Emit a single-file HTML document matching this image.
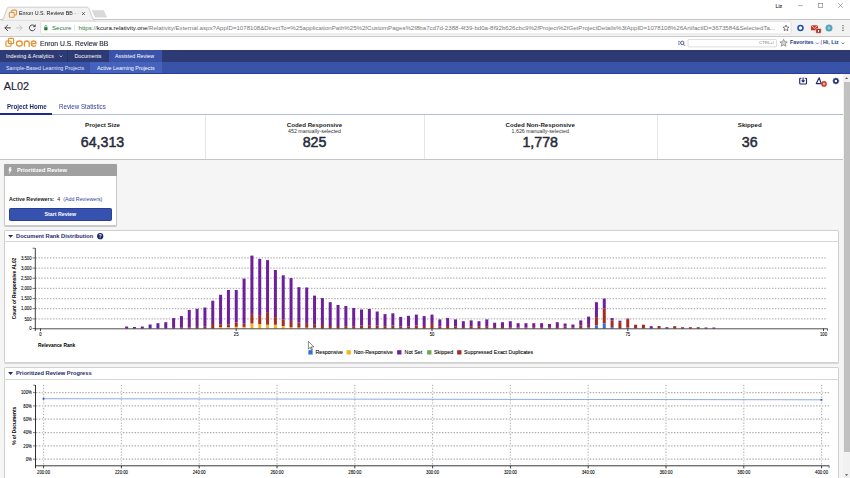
<!DOCTYPE html>
<html>
<head>
<meta charset="utf-8">
<title>Enron U.S. Review BB</title>
<style>
*{margin:0;padding:0;box-sizing:border-box}
html,body{width:850px;height:478px;overflow:hidden;background:#fff}
body{font-family:"Liberation Sans",sans-serif;color:#222;position:relative}
.a{position:absolute;white-space:nowrap;line-height:1}
.b{font-weight:bold}
svg{position:absolute;left:0;top:0}
svg text{font-family:"Liberation Sans",sans-serif}
.sn{-webkit-text-stroke:0.5px #262a38}
.t4{font-size:4.85px;fill:#000;stroke:#000;stroke-width:0.08px}
</style>
</head>
<body>

<!-- ============ browser chrome ============ -->
<div class="a" style="left:0;top:0;width:850px;height:19.5px;background:#fff"></div>
<div class="a" style="left:0;top:19px;width:850px;height:17.5px;background:#f2f2f2;border-top:0.7px solid #c2c2c2;border-bottom:0.8px solid #c9c9c9"></div>
<svg width="850" height="52" viewBox="0 0 850 52">
  <!-- tab -->
  <path d="M1.5 19.4 L3.2 19 L7.2 8.2 Q7.6 7.2 8.8 7.2 L87 7.2 Q88.2 7.2 88.7 8.2 L93 19 L95 19.4 L95 20.2 L1.5 20.2 Z" fill="#f2f2f2" stroke="#bdbdbd" stroke-width="0.7"/>
  <rect x="3.6" y="19.1" width="89" height="1.3" fill="#f2f2f2"/>
  <!-- new tab button -->
  <path d="M92.3 10.4 L103.6 10.4 L106.6 17.2 L95.2 17.2 Z" fill="#d9d9d9" stroke="#cfcfcf" stroke-width="0.4"/>
  <!-- favicon -->
  <g fill="none" stroke="#e39a3c" stroke-width="1.1">
    <rect x="11.6" y="10.1" width="4.9" height="4.9" rx="1"/>
    <rect x="9.3" y="12.4" width="4.9" height="4.9" rx="1" fill="#f2f2f2"/>
  </g>
  <!-- tab close -->
  <path d="M82 12.2 L84.8 15 M84.8 12.2 L82 15" stroke="#333" stroke-width="0.7"/>
  <!-- window controls -->
  <g stroke="#777" stroke-width="0.6" fill="none">
    <path d="M798.3 5.6 H802.8"/>
    <rect x="818.5" y="3.3" width="4.2" height="4.2"/>
    <path d="M838.2 3.2 L842.8 7.8 M842.8 3.2 L838.2 7.8"/>
  </g>
<text x="775.4" y="7.6" font-size="5.4" fill="#333" stroke="#333" stroke-width="0.1">Liz</text>
  <!-- nav arrows -->
  <g stroke="#3c3c3c" stroke-width="0.95" fill="none" stroke-linecap="round" stroke-linejoin="round">
    <path d="M10.4 27.9 H5 M7.6 25.2 L4.9 27.9 L7.6 30.6"/>
  </g>
  <g stroke="#c4c4c4" stroke-width="0.95" fill="none" stroke-linecap="round" stroke-linejoin="round">
    <path d="M16.6 27.9 H22 M19.4 25.2 L22.1 27.9 L19.4 30.6"/>
  </g>
  <g stroke="#3c3c3c" stroke-width="0.95" fill="none">
    <path d="M34.6 26.1 A2.9 2.9 0 1 0 35.1 28.6"/>
    <path d="M35.4 24.4 V26.8 H33" fill="#3c3c3c" stroke-width="0.4"/>
  </g>
  <!-- omnibox -->
  <rect x="40.6" y="21.6" width="750.4" height="12.3" rx="1.2" fill="#fff" stroke="#d2d2d2" stroke-width="0.6"/>
  <!-- lock -->
  <rect x="44.2" y="27.3" width="3.3" height="2.9" rx="0.3" fill="#1c7c30"/>
  <path d="M44.9 27.4 V26.4 A0.95 0.95 0 0 1 46.8 26.4 V27.4" stroke="#1c7c30" stroke-width="0.6" fill="none"/>
  <rect x="74.3" y="24.6" width="0.5" height="6.4" fill="#c8c8c8"/>
  <!-- bookmark star -->
  <path d="M786 25 L786.9 27 L789 27.2 L787.4 28.6 L787.9 30.7 L786 29.6 L784.1 30.7 L784.6 28.6 L783 27.2 L785.1 27 Z" fill="none" stroke="#333" stroke-width="0.6" stroke-linejoin="round"/>
  <!-- extensions -->
  <circle cx="800.5" cy="28" r="2.5" fill="#fff" stroke="#1d4fa8" stroke-width="1.5"/>
  <rect x="811" y="25.3" width="7" height="5" fill="#c0392b"/>
  <path d="M811 25.3 L814.5 28.2 L818 25.3" stroke="#fff" stroke-width="0.6" fill="none"/>
  <rect x="815.8" y="28.6" width="5.4" height="4.6" rx="0.6" fill="#a82a1a" stroke="#fff" stroke-width="0.5"/>
  <rect x="817.9" y="30" width="1.2" height="2" fill="#fff"/>
  <circle cx="829" cy="28" r="3.5" fill="#5aa6b8"/>
  <circle cx="829" cy="28" r="2" fill="#8fd0dc" stroke="#3d7f9c" stroke-width="0.5"/>
  <g fill="#444"><circle cx="843" cy="25.6" r="0.65"/><circle cx="843" cy="28" r="0.65"/><circle cx="843" cy="30.4" r="0.65"/></g>

  <!-- app logo -->
  <g fill="none" stroke="#df9233" stroke-width="1.15">
    <rect x="8.4" y="38.4" width="5.2" height="5.2" rx="1"/>
    <rect x="5.9" y="41" width="5.2" height="5.2" rx="1"/>
  </g>
  <!-- "one" wordmark -->
  <g fill="none" stroke="#e2953a" stroke-width="1.35">
    <ellipse cx="19.4" cy="43.6" rx="2.9" ry="2.6"/>
    <path d="M24.4 46.8 V43.4 Q24.4 41 26.8 41 Q29.2 41 29.2 43.4 V46.8"/>
    <path d="M31.4 43.6 H36 Q36 41 33.7 41 Q31.3 41 31.3 43.6 Q31.3 46.3 33.8 46.3 Q35.2 46.3 35.9 45.4"/>
  </g>
  <!-- search icon -->
  <g stroke="#26388a" fill="none" stroke-width="0.8">
    <circle cx="682.2" cy="42.9" r="1.7"/><path d="M683.5 44.2 L685 45.8"/>
    <path d="M678.2 41.6 H679.8 M678.2 43 H679.5 M678.2 44.4 H679.8" stroke-width="0.6"/>
  </g>
  <rect x="688" y="39.5" width="88.5" height="7.4" rx="0.8" fill="#fff" stroke="#c6c6c6" stroke-width="0.6"/>
  <path d="M783.6 39.3 L784.7 41.8 L787.4 42 L785.3 43.7 L786 46.3 L783.6 44.9 L781.2 46.3 L781.9 43.7 L779.8 42 L782.5 41.8 Z" fill="#d4d4d4" stroke="#7e7e7e" stroke-width="0.7" stroke-linejoin="round"/>
  <path d="M816 42.6 L817.4 44 L818.8 42.6" stroke="#26388a" stroke-width="0.6" fill="none"/>
  <path d="M841.6 42.6 L843 44 L844.4 42.6" stroke="#26388a" stroke-width="0.6" fill="none"/>
</svg>

<div class="a" style="left:19px;top:11px;font-size:5.35px;color:#111;width:60px;overflow:hidden;-webkit-mask-image:linear-gradient(90deg,#000 85%,transparent)">Enron U.S. Review BB - Relativity</div>
<div class="a" style="left:52px;top:24.8px;font-size:6.1px;color:#1c7c30">Secure</div>
<div class="a" id="url" style="left:78.5px;top:24.8px;font-size:6.12px;color:#777"><span style="color:#1c7c30">https</span>://<span style="color:#111">kcura.relativity.one</span>/Relativity/External.aspx?AppID=1078108&amp;DirectTo=%25applicationPath%25%2fCustomPages%2f8ba7cd7d-2388-4f39-bd0a-8f92b626cbc9%2fProject%2fGetProjectDetails%3fAppID=1078108%26ArtifactID=3673584&amp;SelectedTa...</div>

<div class="a" id="hdr" style="left:39.6px;top:39.7px;font-size:7.9px;color:#1a1e33;-webkit-text-stroke:0.12px #1a1e33;transform:scaleX(0.861);transform-origin:0 0">Enron U.S. Review BB</div>
<div class="a" style="right:76px;top:41.1px;font-size:4.3px;color:#777">CTRL+/</div>
<div class="a b" id="fav" style="left:790px;top:40.4px;font-size:5.3px;color:#26388a">Favorites</div>
<div class="a" style="left:820.6px;top:40.2px;font-size:5.3px;color:#26388a">|</div>
<div class="a b" id="hi" style="left:823px;top:40.4px;font-size:5.3px;color:#26388a">Hi, Liz</div>

<!-- ============ nav bars ============ -->
<div class="a" style="left:0;top:49.6px;width:850px;height:12.6px;background:#2d3a74"></div>
<div class="a" style="left:108.5px;top:49.6px;width:53px;height:12.6px;background:#3a53a8"></div>
<div class="a" style="left:66.6px;top:49.6px;width:0.6px;height:12.6px;background:#22306a"></div>
<div class="a" id="n1" style="left:6px;top:53.7px;font-size:5.35px;color:#fff">Indexing &amp; Analytics</div>
<svg width="850" height="120" viewBox="0 0 850 120" style="pointer-events:none"><path d="M59.6 55.6 L61 57 L62.4 55.6" stroke="#fff" stroke-width="0.6" fill="none"/></svg>
<div class="a" id="n2" style="left:74.5px;top:53.7px;font-size:5.35px;color:#fff">Documents</div>
<div class="a" id="n3" style="left:115px;top:53.7px;font-size:5.35px;color:#fff">Assisted Review</div>

<div class="a" style="left:0;top:62.2px;width:850px;height:11.6px;background:#3953a8;border-bottom:1.2px solid #2a3c98"></div>
<div class="a" style="left:90px;top:62.2px;width:71.5px;height:10.4px;background:#4562bc"></div>
<div class="a" id="s1" style="left:6px;top:65.9px;font-size:5.35px;color:#e4e8f6">Sample-Based Learning Projects</div>
<div class="a" id="s2" style="left:97px;top:65.9px;font-size:5.35px;color:#fff">Active Learning Projects</div>

<!-- ============ page ============ -->
<div class="a" id="ttl" style="left:3.8px;top:80.9px;font-size:10.8px;color:#1e2336;-webkit-text-stroke:0.18px #1e2336">AL02</div>

<!-- action icons -->
<svg width="850" height="120" viewBox="0 0 850 120">
  <g stroke="#1f2b75" fill="none" stroke-width="1.15" stroke-linejoin="round">
    <path d="M801.4 78.2 H800.4 Q799.7 78.2 799.7 79 V83.3 Q799.7 84 800.4 84 H805.8 Q806.5 84 806.5 83.3 V79 Q806.5 78.2 805.8 78.2 H804.8"/>
    <path d="M803.1 77.4 V81.6 M801.6 80.4 L803.1 81.9 L804.6 80.4"/>
    <path d="M819.2 77.8 L816.3 83.6 H821.2 Z"/>
  </g>
  <circle cx="824" cy="83.9" r="2.8" fill="#c8391f"/>
  <ellipse cx="824" cy="83.9" rx="0.75" ry="1.1" fill="none" stroke="#fff" stroke-width="0.7"/>
  <circle cx="835.9" cy="81" r="2" fill="none" stroke="#1f2b75" stroke-width="1.5"/>
  <g stroke="#1f2b75" stroke-width="1.1">
    <path d="M835.9 77.7 V79 M835.9 83 V84.3 M832.6 81 H833.9 M837.9 81 H839.2 M833.55 78.65 L834.5 79.6 M837.3 82.4 L838.25 83.35 M838.25 78.65 L837.3 79.6 M834.5 82.4 L833.55 83.35"/>
  </g>
</svg>

<!-- tabs -->
<div class="a b" id="tb1" style="left:6.5px;top:103.9px;font-size:6.5px;color:#1d2a6c;transform:scaleX(0.946);transform-origin:0 0">Project Home</div>
<div class="a" id="tb2" style="left:58.7px;top:103.9px;font-size:6.5px;color:#2f3f94;transform:scaleX(0.951);transform-origin:0 0">Review Statistics</div>
<div class="a" style="left:0;top:114px;width:843px;height:1.2px;background:#b0bbe2"></div>
<div class="a" style="left:0;top:113.4px;width:52.3px;height:1.8px;background:#1c2c8e"></div>

<!-- stats row -->
<div class="a" style="left:0;top:114.9px;width:843px;height:45.3px;background:#fff;border-bottom:1px solid #c4c4c4"></div>
<div class="a" style="left:205.3px;top:115px;width:0.7px;height:44px;background:#e6e6e6"></div>
<div class="a" style="left:423.8px;top:115px;width:0.7px;height:44px;background:#e6e6e6"></div>
<div class="a" style="left:656.6px;top:115px;width:0.7px;height:44px;background:#e6e6e6"></div>

<div class="a b st" style="left:0;width:205px;top:121.5px;font-size:6.15px;text-align:center">Project Size</div>
<div class="a sn" style="left:0;width:205px;top:135.4px;font-size:14.2px;text-align:center;color:#262a38">64,313</div>

<div class="a b st" style="left:205px;width:219px;top:121.5px;font-size:6.15px;text-align:center">Coded Responsive</div>
<div class="a" style="left:205px;width:219px;top:128.9px;font-size:5.3px;text-align:center;color:#333">452 manually-selected</div>
<div class="a sn" style="left:205px;width:219px;top:135.4px;font-size:14.2px;text-align:center;color:#262a38">825</div>

<div class="a b st" style="left:424px;width:232.5px;top:121.5px;font-size:6.15px;text-align:center">Coded Non-Responsive</div>
<div class="a" style="left:424px;width:232.5px;top:128.9px;font-size:5.3px;text-align:center;color:#333">1,626 manually-selected</div>
<div class="a sn" style="left:424px;width:232.5px;top:135.4px;font-size:14.2px;text-align:center;color:#262a38">1,778</div>

<div class="a b st" style="left:656.5px;width:186.5px;top:121.5px;font-size:6.15px;text-align:center">Skipped</div>
<div class="a sn" style="left:656.5px;width:186.5px;top:135.4px;font-size:14.2px;text-align:center;color:#262a38">36</div>

<!-- gray page background -->
<div class="a" style="left:0;top:160.2px;width:843px;height:318px;background:#f5f5f5"></div>

<!-- Prioritized review card -->
<div class="a" style="left:4px;top:164px;width:113.2px;height:62.4px;background:#fff;border:0.8px solid #c9c9c9;border-radius:1.4px;box-shadow:0 0.4px 0.8px rgba(0,0,0,.18)"></div>
<div class="a" style="left:4px;top:164px;width:113.2px;height:12.2px;background:#a0a0a0;border-radius:1.4px 1.4px 0 0"></div>
<svg width="850" height="478" viewBox="0 0 850 478" style="pointer-events:none">
  <path d="M9.4 167.4 H11.2 L10.4 169.6 H11.6 L9.2 173.6 L9.8 170.8 H8.7 Z" fill="#fff" stroke="#fff" stroke-width="0.3"/>
</svg>
<div class="a b" id="pr" style="left:17px;top:167.9px;font-size:5.8px;color:#fff">Prioritized Review</div>
<div class="a" id="ar" style="left:9px;top:197.1px;font-size:5.3px;color:#222"><b>Active Reviewers:</b>&nbsp; 4 &nbsp;<span style="color:#2d3f96">(Add Reviewers)</span></div>
<div class="a b" style="left:9px;top:208.2px;width:102.6px;height:12.6px;background:#3751ae;border:0.6px solid #2a3f92;border-radius:1.4px;color:#fff;font-size:5.25px;text-align:center;line-height:11.4px">Start Review</div>

<!-- Document Rank Distribution panel -->
<div class="a" style="left:4px;top:230px;width:835.4px;height:132.8px;background:#fff;border:1px solid #d0d0d0;border-radius:1.6px;box-shadow:0 0.4px 0.8px rgba(0,0,0,.12)"></div>
<div class="a" style="left:4px;top:241.2px;width:835.4px;height:0.9px;background:#d6d6d6"></div>
<div class="a b" id="drd" style="left:16px;top:233.7px;font-size:5.73px;color:#1d2a6c">Document Rank Distribution</div>

<!-- Prioritized Review Progress panel -->
<div class="a" style="left:4px;top:367.4px;width:835.4px;height:120px;background:#fff;border:1px solid #d0d0d0;border-radius:1.6px"></div>
<div class="a" style="left:4px;top:378.5px;width:835.4px;height:0.9px;background:#d6d6d6"></div>
<div class="a b" id="prp" style="left:16px;top:370.7px;font-size:5.73px;color:#1d2a6c">Prioritized Review Progress</div>

<svg width="850" height="478" viewBox="0 0 850 478">
  <!-- header triangles / help -->
  <path d="M8.1 234.9 H13.1 L10.6 237.8 Z" fill="#1d2a6c"/>
  <path d="M8.1 372.1 H13.1 L10.6 375 Z" fill="#1d2a6c"/>
  <circle cx="100.2" cy="236.2" r="3.1" fill="#1d2a6c"/>
  <text x="100.2" y="237.9" text-anchor="middle" font-size="4.6" font-weight="bold" fill="#fff">?</text>

  <!-- chart 1 -->
  <line x1="35.5" y1="318.9" x2="826" y2="318.9" stroke="#b4b4b4" stroke-width="1.2" stroke-dasharray="1.4 1.5"/>
<line x1="32.5" y1="318.9" x2="35" y2="318.9" stroke="#222" stroke-width="0.6"/>
<text transform="translate(31.6 320.6) scale(0.88 1)" text-anchor="end" class="t4">500</text>
<line x1="35.5" y1="308.7" x2="826" y2="308.7" stroke="#b4b4b4" stroke-width="1.2" stroke-dasharray="1.4 1.5"/>
<line x1="32.5" y1="308.7" x2="35" y2="308.7" stroke="#222" stroke-width="0.6"/>
<text transform="translate(31.6 310.4) scale(0.88 1)" text-anchor="end" class="t4">1,000</text>
<line x1="35.5" y1="298.6" x2="826" y2="298.6" stroke="#b4b4b4" stroke-width="1.2" stroke-dasharray="1.4 1.5"/>
<line x1="32.5" y1="298.6" x2="35" y2="298.6" stroke="#222" stroke-width="0.6"/>
<text transform="translate(31.6 300.2) scale(0.88 1)" text-anchor="end" class="t4">1,500</text>
<line x1="35.5" y1="288.4" x2="826" y2="288.4" stroke="#b4b4b4" stroke-width="1.2" stroke-dasharray="1.4 1.5"/>
<line x1="32.5" y1="288.4" x2="35" y2="288.4" stroke="#222" stroke-width="0.6"/>
<text transform="translate(31.6 290.1) scale(0.88 1)" text-anchor="end" class="t4">2,000</text>
<line x1="35.5" y1="278.2" x2="826" y2="278.2" stroke="#b4b4b4" stroke-width="1.2" stroke-dasharray="1.4 1.5"/>
<line x1="32.5" y1="278.2" x2="35" y2="278.2" stroke="#222" stroke-width="0.6"/>
<text transform="translate(31.6 279.9) scale(0.88 1)" text-anchor="end" class="t4">2,500</text>
<line x1="35.5" y1="268.1" x2="826" y2="268.1" stroke="#b4b4b4" stroke-width="1.2" stroke-dasharray="1.4 1.5"/>
<line x1="32.5" y1="268.1" x2="35" y2="268.1" stroke="#222" stroke-width="0.6"/>
<text transform="translate(31.6 269.8) scale(0.88 1)" text-anchor="end" class="t4">3,000</text>
<line x1="35.5" y1="257.9" x2="826" y2="257.9" stroke="#b4b4b4" stroke-width="1.2" stroke-dasharray="1.4 1.5"/>
<line x1="32.5" y1="257.9" x2="35" y2="257.9" stroke="#222" stroke-width="0.6"/>
<text transform="translate(31.6 259.6) scale(0.88 1)" text-anchor="end" class="t4">3,500</text>
<line x1="32.5" y1="328.5" x2="35" y2="328.5" stroke="#222" stroke-width="0.6"/>
<text transform="translate(31.6 330.2) scale(0.88 1)" text-anchor="end" class="t4">0</text>
<line x1="40.5" y1="328.5" x2="40.5" y2="331.1" stroke="#222" stroke-width="0.85"/>
<text transform="translate(40.5 335.9) scale(0.88 1)" text-anchor="middle" class="t4">0</text>
<line x1="236.2" y1="328.5" x2="236.2" y2="331.1" stroke="#222" stroke-width="0.85"/>
<text transform="translate(236.2 335.9) scale(0.88 1)" text-anchor="middle" class="t4">25</text>
<line x1="432.0" y1="328.5" x2="432.0" y2="331.1" stroke="#222" stroke-width="0.85"/>
<text transform="translate(432.0 335.9) scale(0.88 1)" text-anchor="middle" class="t4">50</text>
<line x1="627.8" y1="328.5" x2="627.8" y2="331.1" stroke="#222" stroke-width="0.85"/>
<text transform="translate(627.8 335.9) scale(0.88 1)" text-anchor="middle" class="t4">75</text>
<line x1="823.5" y1="328.5" x2="823.5" y2="331.1" stroke="#222" stroke-width="0.85"/>
<text transform="translate(823.5 335.9) scale(0.88 1)" text-anchor="middle" class="t4">100</text>
  <line x1="35.3" y1="248" x2="35.3" y2="331" stroke="#1a1a1a" stroke-width="0.85"/>
  <line x1="32.5" y1="248.2" x2="35" y2="248.2" stroke="#222" stroke-width="0.6"/>
  <rect x="125.13" y="326.50" width="3.0" height="2.00" fill="#6d1f9c"/>
<rect x="132.96" y="327.00" width="3.0" height="1.50" fill="#6d1f9c"/>
<rect x="140.79" y="326.50" width="3.0" height="2.00" fill="#6d1f9c"/>
<rect x="148.62" y="324.50" width="3.0" height="4.00" fill="#6d1f9c"/>
<rect x="156.45" y="323.20" width="3.0" height="5.30" fill="#6d1f9c"/>
<rect x="164.28" y="322.20" width="3.0" height="6.30" fill="#6d1f9c"/>
<rect x="172.11" y="327.90" width="3.0" height="0.60" fill="#a92a20"/>
<rect x="172.11" y="318.10" width="3.0" height="9.80" fill="#6d1f9c"/>
<rect x="179.94" y="327.70" width="3.0" height="0.80" fill="#a92a20"/>
<rect x="179.94" y="316.10" width="3.0" height="11.60" fill="#6d1f9c"/>
<rect x="187.77" y="327.30" width="3.0" height="1.20" fill="#a92a20"/>
<rect x="187.77" y="310.00" width="3.0" height="17.30" fill="#6d1f9c"/>
<rect x="195.60" y="326.90" width="3.0" height="1.60" fill="#a92a20"/>
<rect x="195.60" y="308.80" width="3.0" height="18.10" fill="#6d1f9c"/>
<rect x="203.43" y="326.70" width="3.0" height="1.80" fill="#a92a20"/>
<rect x="203.43" y="307.50" width="3.0" height="19.20" fill="#6d1f9c"/>
<rect x="211.26" y="324.00" width="3.0" height="4.50" fill="#a92a20"/>
<rect x="211.26" y="300.70" width="3.0" height="23.30" fill="#6d1f9c"/>
<rect x="219.09" y="327.00" width="3.0" height="1.50" fill="#f5b31c"/>
<rect x="219.09" y="324.60" width="3.0" height="2.40" fill="#a92a20"/>
<rect x="219.09" y="294.80" width="3.0" height="29.80" fill="#6d1f9c"/>
<rect x="226.92" y="327.20" width="3.0" height="1.30" fill="#f5b31c"/>
<rect x="226.92" y="324.60" width="3.0" height="2.60" fill="#a92a20"/>
<rect x="226.92" y="290.00" width="3.0" height="34.60" fill="#6d1f9c"/>
<rect x="234.75" y="326.80" width="3.0" height="1.70" fill="#f5b31c"/>
<rect x="234.75" y="322.40" width="3.0" height="4.40" fill="#a92a20"/>
<rect x="234.75" y="290.00" width="3.0" height="32.40" fill="#6d1f9c"/>
<rect x="242.58" y="326.90" width="3.0" height="1.60" fill="#f5b31c"/>
<rect x="242.58" y="323.70" width="3.0" height="3.20" fill="#a92a20"/>
<rect x="242.58" y="278.60" width="3.0" height="45.10" fill="#6d1f9c"/>
<rect x="250.41" y="323.50" width="3.0" height="5.00" fill="#f5b31c"/>
<rect x="250.41" y="313.90" width="3.0" height="9.60" fill="#a92a20"/>
<rect x="250.41" y="255.60" width="3.0" height="58.30" fill="#6d1f9c"/>
<rect x="258.24" y="324.00" width="3.0" height="4.50" fill="#f5b31c"/>
<rect x="258.24" y="315.10" width="3.0" height="8.90" fill="#a92a20"/>
<rect x="258.24" y="258.90" width="3.0" height="56.20" fill="#6d1f9c"/>
<rect x="266.07" y="324.70" width="3.0" height="3.80" fill="#f5b31c"/>
<rect x="266.07" y="312.10" width="3.0" height="12.60" fill="#a92a20"/>
<rect x="266.07" y="260.10" width="3.0" height="52.00" fill="#6d1f9c"/>
<rect x="273.90" y="324.70" width="3.0" height="3.80" fill="#f5b31c"/>
<rect x="273.90" y="317.10" width="3.0" height="7.60" fill="#a92a20"/>
<rect x="273.90" y="270.00" width="3.0" height="47.10" fill="#6d1f9c"/>
<rect x="281.73" y="326.00" width="3.0" height="2.50" fill="#f5b31c"/>
<rect x="281.73" y="319.70" width="3.0" height="6.30" fill="#a92a20"/>
<rect x="281.73" y="275.30" width="3.0" height="44.40" fill="#6d1f9c"/>
<rect x="289.56" y="327.20" width="3.0" height="1.30" fill="#f5b31c"/>
<rect x="289.56" y="320.90" width="3.0" height="6.30" fill="#a92a20"/>
<rect x="289.56" y="278.10" width="3.0" height="42.80" fill="#6d1f9c"/>
<rect x="297.39" y="327.60" width="3.0" height="0.90" fill="#f5b31c"/>
<rect x="297.39" y="322.60" width="3.0" height="5.00" fill="#a92a20"/>
<rect x="297.39" y="287.20" width="3.0" height="35.40" fill="#6d1f9c"/>
<rect x="305.22" y="327.70" width="3.0" height="0.80" fill="#f5b31c"/>
<rect x="305.22" y="322.90" width="3.0" height="4.80" fill="#a92a20"/>
<rect x="305.22" y="287.50" width="3.0" height="35.40" fill="#6d1f9c"/>
<rect x="313.05" y="327.80" width="3.0" height="0.70" fill="#f5b31c"/>
<rect x="313.05" y="324.80" width="3.0" height="3.00" fill="#a92a20"/>
<rect x="313.05" y="295.60" width="3.0" height="29.20" fill="#6d1f9c"/>
<rect x="320.88" y="325.00" width="3.0" height="3.50" fill="#a92a20"/>
<rect x="320.88" y="298.10" width="3.0" height="26.90" fill="#6d1f9c"/>
<rect x="328.71" y="326.00" width="3.0" height="2.50" fill="#a92a20"/>
<rect x="328.71" y="302.20" width="3.0" height="23.80" fill="#6d1f9c"/>
<rect x="336.54" y="326.00" width="3.0" height="2.50" fill="#a92a20"/>
<rect x="336.54" y="305.00" width="3.0" height="21.00" fill="#6d1f9c"/>
<rect x="344.37" y="326.20" width="3.0" height="2.30" fill="#a92a20"/>
<rect x="344.37" y="306.00" width="3.0" height="20.20" fill="#6d1f9c"/>
<rect x="352.20" y="326.20" width="3.0" height="2.30" fill="#a92a20"/>
<rect x="352.20" y="308.00" width="3.0" height="18.20" fill="#6d1f9c"/>
<rect x="360.03" y="325.50" width="3.0" height="3.00" fill="#a92a20"/>
<rect x="360.03" y="309.50" width="3.0" height="16.00" fill="#6d1f9c"/>
<rect x="367.86" y="325.20" width="3.0" height="3.30" fill="#a92a20"/>
<rect x="367.86" y="309.00" width="3.0" height="16.20" fill="#6d1f9c"/>
<rect x="375.69" y="325.70" width="3.0" height="2.80" fill="#a92a20"/>
<rect x="375.69" y="311.50" width="3.0" height="14.20" fill="#6d1f9c"/>
<rect x="383.52" y="326.20" width="3.0" height="2.30" fill="#a92a20"/>
<rect x="383.52" y="314.10" width="3.0" height="12.10" fill="#6d1f9c"/>
<rect x="391.35" y="325.50" width="3.0" height="3.00" fill="#a92a20"/>
<rect x="391.35" y="313.30" width="3.0" height="12.20" fill="#6d1f9c"/>
<rect x="399.18" y="326.50" width="3.0" height="2.00" fill="#a92a20"/>
<rect x="399.18" y="316.90" width="3.0" height="9.60" fill="#6d1f9c"/>
<rect x="407.01" y="326.50" width="3.0" height="2.00" fill="#a92a20"/>
<rect x="407.01" y="315.80" width="3.0" height="10.70" fill="#6d1f9c"/>
<rect x="414.84" y="325.50" width="3.0" height="3.00" fill="#a92a20"/>
<rect x="414.84" y="314.60" width="3.0" height="10.90" fill="#6d1f9c"/>
<rect x="422.67" y="326.00" width="3.0" height="2.50" fill="#a92a20"/>
<rect x="422.67" y="316.10" width="3.0" height="9.90" fill="#6d1f9c"/>
<rect x="430.50" y="323.00" width="3.0" height="5.50" fill="#a92a20"/>
<rect x="430.50" y="314.60" width="3.0" height="8.40" fill="#6d1f9c"/>
<rect x="438.33" y="326.50" width="3.0" height="2.00" fill="#a92a20"/>
<rect x="438.33" y="319.40" width="3.0" height="7.10" fill="#6d1f9c"/>
<rect x="446.16" y="326.00" width="3.0" height="2.50" fill="#a92a20"/>
<rect x="446.16" y="317.90" width="3.0" height="8.10" fill="#6d1f9c"/>
<rect x="453.99" y="326.50" width="3.0" height="2.00" fill="#a92a20"/>
<rect x="453.99" y="319.40" width="3.0" height="7.10" fill="#6d1f9c"/>
<rect x="461.82" y="327.00" width="3.0" height="1.50" fill="#a92a20"/>
<rect x="461.82" y="321.20" width="3.0" height="5.80" fill="#6d1f9c"/>
<rect x="469.65" y="326.20" width="3.0" height="2.30" fill="#a92a20"/>
<rect x="469.65" y="320.40" width="3.0" height="5.80" fill="#6d1f9c"/>
<rect x="477.48" y="326.20" width="3.0" height="2.30" fill="#a92a20"/>
<rect x="477.48" y="321.20" width="3.0" height="5.00" fill="#6d1f9c"/>
<rect x="485.31" y="326.20" width="3.0" height="2.30" fill="#a92a20"/>
<rect x="485.31" y="319.40" width="3.0" height="6.80" fill="#6d1f9c"/>
<rect x="493.14" y="327.00" width="3.0" height="1.50" fill="#a92a20"/>
<rect x="493.14" y="322.70" width="3.0" height="4.30" fill="#6d1f9c"/>
<rect x="500.97" y="327.00" width="3.0" height="1.50" fill="#a92a20"/>
<rect x="500.97" y="322.20" width="3.0" height="4.80" fill="#6d1f9c"/>
<rect x="508.80" y="327.20" width="3.0" height="1.30" fill="#a92a20"/>
<rect x="508.80" y="321.20" width="3.0" height="6.00" fill="#6d1f9c"/>
<rect x="516.63" y="327.50" width="3.0" height="1.00" fill="#a92a20"/>
<rect x="516.63" y="323.20" width="3.0" height="4.30" fill="#6d1f9c"/>
<rect x="524.46" y="327.50" width="3.0" height="1.00" fill="#a92a20"/>
<rect x="524.46" y="323.20" width="3.0" height="4.30" fill="#6d1f9c"/>
<rect x="532.29" y="327.20" width="3.0" height="1.30" fill="#a92a20"/>
<rect x="532.29" y="323.20" width="3.0" height="4.00" fill="#6d1f9c"/>
<rect x="540.12" y="327.20" width="3.0" height="1.30" fill="#a92a20"/>
<rect x="540.12" y="323.20" width="3.0" height="4.00" fill="#6d1f9c"/>
<rect x="547.95" y="327.20" width="3.0" height="1.30" fill="#a92a20"/>
<rect x="547.95" y="324.00" width="3.0" height="3.20" fill="#6d1f9c"/>
<rect x="555.78" y="327.00" width="3.0" height="1.50" fill="#a92a20"/>
<rect x="555.78" y="322.20" width="3.0" height="4.80" fill="#6d1f9c"/>
<rect x="563.61" y="326.70" width="3.0" height="1.80" fill="#a92a20"/>
<rect x="563.61" y="323.50" width="3.0" height="3.20" fill="#6d1f9c"/>
<rect x="571.44" y="327.70" width="3.0" height="0.80" fill="#a92a20"/>
<rect x="571.44" y="324.50" width="3.0" height="3.20" fill="#6d1f9c"/>
<rect x="579.27" y="325.50" width="3.0" height="3.00" fill="#a92a20"/>
<rect x="579.27" y="320.40" width="3.0" height="5.10" fill="#6d1f9c"/>
<rect x="587.10" y="327.20" width="3.0" height="1.30" fill="#2f6fe0"/>
<rect x="587.10" y="324.90" width="3.0" height="2.30" fill="#a92a20"/>
<rect x="587.10" y="316.60" width="3.0" height="8.30" fill="#6d1f9c"/>
<rect x="594.93" y="325.50" width="3.0" height="3.00" fill="#2f6fe0"/>
<rect x="594.93" y="317.10" width="3.0" height="8.40" fill="#a92a20"/>
<rect x="594.93" y="302.20" width="3.0" height="14.90" fill="#6d1f9c"/>
<rect x="602.76" y="323.50" width="3.0" height="5.00" fill="#2f6fe0"/>
<rect x="602.76" y="308.50" width="3.0" height="15.00" fill="#a92a20"/>
<rect x="602.76" y="298.60" width="3.0" height="9.90" fill="#6d1f9c"/>
<rect x="610.59" y="327.20" width="3.0" height="1.30" fill="#2f6fe0"/>
<rect x="610.59" y="320.40" width="3.0" height="6.80" fill="#a92a20"/>
<rect x="610.59" y="318.10" width="3.0" height="2.30" fill="#6d1f9c"/>
<rect x="618.42" y="322.20" width="3.0" height="6.30" fill="#a92a20"/>
<rect x="618.42" y="320.70" width="3.0" height="1.50" fill="#6d1f9c"/>
<rect x="626.25" y="327.50" width="3.0" height="1.00" fill="#2f6fe0"/>
<rect x="626.25" y="319.10" width="3.0" height="8.40" fill="#a92a20"/>
<rect x="626.25" y="318.60" width="3.0" height="0.50" fill="#6d1f9c"/>
<rect x="634.08" y="328.10" width="3.0" height="0.40" fill="#2f6fe0"/>
<rect x="634.08" y="324.70" width="3.0" height="3.40" fill="#a92a20"/>
<rect x="641.91" y="328.10" width="3.0" height="0.40" fill="#2f6fe0"/>
<rect x="641.91" y="324.70" width="3.0" height="3.40" fill="#a92a20"/>
<rect x="649.74" y="326.20" width="3.0" height="2.30" fill="#6d1f9c"/>
<rect x="657.57" y="326.00" width="3.0" height="2.50" fill="#a92a20"/>
<rect x="665.40" y="327.20" width="3.0" height="1.30" fill="#6d1f9c"/>
<rect x="673.23" y="326.20" width="3.0" height="2.30" fill="#a92a20"/>
<rect x="681.06" y="327.20" width="3.0" height="1.30" fill="#a92a20"/>
<rect x="688.89" y="327.20" width="3.0" height="1.30" fill="#a92a20"/>
<rect x="696.72" y="327.20" width="3.0" height="1.30" fill="#a92a20"/>
<rect x="704.55" y="327.50" width="3.0" height="1.00" fill="#6d1f9c"/>
<rect x="712.38" y="327.50" width="3.0" height="1.00" fill="#6d1f9c"/>
  <line x1="34.7" y1="328.8" x2="827.8" y2="328.8" stroke="#222" stroke-width="0.8"/>
  <line x1="827.5" y1="328.8" x2="827.5" y2="331" stroke="#222" stroke-width="0.6"/>
  <text transform="translate(15.9 288.5) rotate(-90)" text-anchor="middle" font-size="4.87" font-weight="bold" fill="#000">Count of Responsive AL02</text>
  <text x="38" y="346.6" font-size="4.87" font-weight="bold" fill="#000">Relevance Rank</text>

  <!-- legend -->
  <g font-size="5.3" fill="#000" stroke="#000" stroke-width="0.08">
    <rect x="308.35" y="350.2" width="4.3" height="4.3" stroke="none" fill="#2f6fe0"/><text x="315.4" y="354.3">Responsive</text>
    <rect x="346.55" y="350.2" width="4.3" height="4.3" stroke="none" fill="#f5b31c"/><text x="353.8" y="354.3">Non-Responsive</text>
    <rect x="397.15" y="350.2" width="4.3" height="4.3" stroke="none" fill="#6d1f9c"/><text x="404.6" y="354.3">Not Set</text>
    <rect x="427.15" y="350.2" width="4.3" height="4.3" stroke="none" fill="#6aa84f"/><text x="434" y="354.3">Skipped</text>
    <rect x="457.15" y="350.2" width="4.3" height="4.3" stroke="none" fill="#a92a20"/><text x="464" y="354.3">Suppressed Exact Duplicates</text>
  </g>
  <!-- mouse cursor -->
  <path transform="translate(1.2 0.6)" d="M307.2 340.6 V348.4 L309 346.7 L310.2 349.5 L311.2 349.1 L310 346.4 H312.6 Z" fill="#fff" stroke="#111" stroke-width="0.5" stroke-linejoin="round"/>

  <!-- chart 2 -->
  <line x1="36" y1="392.6" x2="829" y2="392.6" stroke="#adadad" stroke-width="1.2" stroke-dasharray="1.4 1.5"/>
<line x1="33" y1="392.6" x2="35.5" y2="392.6" stroke="#222" stroke-width="0.6"/>
<text transform="translate(31.8 394.3) scale(0.88 1)" text-anchor="end" class="t4">100%</text>
<line x1="36" y1="405.9" x2="829" y2="405.9" stroke="#adadad" stroke-width="1.2" stroke-dasharray="1.4 1.5"/>
<line x1="33" y1="405.9" x2="35.5" y2="405.9" stroke="#222" stroke-width="0.6"/>
<text transform="translate(31.8 407.59999999999997) scale(0.88 1)" text-anchor="end" class="t4">80%</text>
<line x1="36" y1="419.2" x2="829" y2="419.2" stroke="#adadad" stroke-width="1.2" stroke-dasharray="1.4 1.5"/>
<line x1="33" y1="419.2" x2="35.5" y2="419.2" stroke="#222" stroke-width="0.6"/>
<text transform="translate(31.8 420.9) scale(0.88 1)" text-anchor="end" class="t4">60%</text>
<line x1="36" y1="432.6" x2="829" y2="432.6" stroke="#adadad" stroke-width="1.2" stroke-dasharray="1.4 1.5"/>
<line x1="33" y1="432.6" x2="35.5" y2="432.6" stroke="#222" stroke-width="0.6"/>
<text transform="translate(31.8 434.3) scale(0.88 1)" text-anchor="end" class="t4">40%</text>
<line x1="36" y1="445.9" x2="829" y2="445.9" stroke="#adadad" stroke-width="1.2" stroke-dasharray="1.4 1.5"/>
<line x1="33" y1="445.9" x2="35.5" y2="445.9" stroke="#222" stroke-width="0.6"/>
<text transform="translate(31.8 447.59999999999997) scale(0.88 1)" text-anchor="end" class="t4">20%</text>
<line x1="36" y1="459.2" x2="829" y2="459.2" stroke="#adadad" stroke-width="1.2" stroke-dasharray="1.4 1.5"/>
<line x1="33" y1="459.2" x2="35.5" y2="459.2" stroke="#222" stroke-width="0.6"/>
<text transform="translate(31.8 460.9) scale(0.88 1)" text-anchor="end" class="t4">0%</text>
<line x1="43.6" y1="384.8" x2="43.6" y2="465.5" stroke="#b6b6b6" stroke-width="1.1" stroke-dasharray="1.4 1.5"/>
<line x1="43.6" y1="465.8" x2="43.6" y2="468.4" stroke="#222" stroke-width="0.85"/>
<text transform="translate(43.6 473.5) scale(0.88 1)" text-anchor="middle" class="t4">200:00</text>
<circle cx="43.6" cy="392.6" r="1.1" fill="#fff" stroke="#c4c4c4" stroke-width="0.4"/>
<circle cx="43.6" cy="405.9" r="1.1" fill="#fff" stroke="#c4c4c4" stroke-width="0.4"/>
<circle cx="43.6" cy="419.2" r="1.1" fill="#fff" stroke="#c4c4c4" stroke-width="0.4"/>
<circle cx="43.6" cy="432.6" r="1.1" fill="#fff" stroke="#c4c4c4" stroke-width="0.4"/>
<circle cx="43.6" cy="445.9" r="1.1" fill="#fff" stroke="#c4c4c4" stroke-width="0.4"/>
<circle cx="43.6" cy="459.2" r="1.1" fill="#fff" stroke="#c4c4c4" stroke-width="0.4"/>
<line x1="121.4" y1="384.8" x2="121.4" y2="465.5" stroke="#b6b6b6" stroke-width="1.1" stroke-dasharray="1.4 1.5"/>
<line x1="121.4" y1="465.8" x2="121.4" y2="468.4" stroke="#222" stroke-width="0.85"/>
<text transform="translate(121.4 473.5) scale(0.88 1)" text-anchor="middle" class="t4">220:00</text>
<circle cx="121.4" cy="392.6" r="1.1" fill="#fff" stroke="#c4c4c4" stroke-width="0.4"/>
<circle cx="121.4" cy="405.9" r="1.1" fill="#fff" stroke="#c4c4c4" stroke-width="0.4"/>
<circle cx="121.4" cy="419.2" r="1.1" fill="#fff" stroke="#c4c4c4" stroke-width="0.4"/>
<circle cx="121.4" cy="432.6" r="1.1" fill="#fff" stroke="#c4c4c4" stroke-width="0.4"/>
<circle cx="121.4" cy="445.9" r="1.1" fill="#fff" stroke="#c4c4c4" stroke-width="0.4"/>
<circle cx="121.4" cy="459.2" r="1.1" fill="#fff" stroke="#c4c4c4" stroke-width="0.4"/>
<line x1="199.2" y1="384.8" x2="199.2" y2="465.5" stroke="#b6b6b6" stroke-width="1.1" stroke-dasharray="1.4 1.5"/>
<line x1="199.2" y1="465.8" x2="199.2" y2="468.4" stroke="#222" stroke-width="0.85"/>
<text transform="translate(199.2 473.5) scale(0.88 1)" text-anchor="middle" class="t4">240:00</text>
<circle cx="199.2" cy="392.6" r="1.1" fill="#fff" stroke="#c4c4c4" stroke-width="0.4"/>
<circle cx="199.2" cy="405.9" r="1.1" fill="#fff" stroke="#c4c4c4" stroke-width="0.4"/>
<circle cx="199.2" cy="419.2" r="1.1" fill="#fff" stroke="#c4c4c4" stroke-width="0.4"/>
<circle cx="199.2" cy="432.6" r="1.1" fill="#fff" stroke="#c4c4c4" stroke-width="0.4"/>
<circle cx="199.2" cy="445.9" r="1.1" fill="#fff" stroke="#c4c4c4" stroke-width="0.4"/>
<circle cx="199.2" cy="459.2" r="1.1" fill="#fff" stroke="#c4c4c4" stroke-width="0.4"/>
<line x1="277.0" y1="384.8" x2="277.0" y2="465.5" stroke="#b6b6b6" stroke-width="1.1" stroke-dasharray="1.4 1.5"/>
<line x1="277.0" y1="465.8" x2="277.0" y2="468.4" stroke="#222" stroke-width="0.85"/>
<text transform="translate(277.0 473.5) scale(0.88 1)" text-anchor="middle" class="t4">260:00</text>
<circle cx="277.0" cy="392.6" r="1.1" fill="#fff" stroke="#c4c4c4" stroke-width="0.4"/>
<circle cx="277.0" cy="405.9" r="1.1" fill="#fff" stroke="#c4c4c4" stroke-width="0.4"/>
<circle cx="277.0" cy="419.2" r="1.1" fill="#fff" stroke="#c4c4c4" stroke-width="0.4"/>
<circle cx="277.0" cy="432.6" r="1.1" fill="#fff" stroke="#c4c4c4" stroke-width="0.4"/>
<circle cx="277.0" cy="445.9" r="1.1" fill="#fff" stroke="#c4c4c4" stroke-width="0.4"/>
<circle cx="277.0" cy="459.2" r="1.1" fill="#fff" stroke="#c4c4c4" stroke-width="0.4"/>
<line x1="354.8" y1="384.8" x2="354.8" y2="465.5" stroke="#b6b6b6" stroke-width="1.1" stroke-dasharray="1.4 1.5"/>
<line x1="354.8" y1="465.8" x2="354.8" y2="468.4" stroke="#222" stroke-width="0.85"/>
<text transform="translate(354.8 473.5) scale(0.88 1)" text-anchor="middle" class="t4">280:00</text>
<circle cx="354.8" cy="392.6" r="1.1" fill="#fff" stroke="#c4c4c4" stroke-width="0.4"/>
<circle cx="354.8" cy="405.9" r="1.1" fill="#fff" stroke="#c4c4c4" stroke-width="0.4"/>
<circle cx="354.8" cy="419.2" r="1.1" fill="#fff" stroke="#c4c4c4" stroke-width="0.4"/>
<circle cx="354.8" cy="432.6" r="1.1" fill="#fff" stroke="#c4c4c4" stroke-width="0.4"/>
<circle cx="354.8" cy="445.9" r="1.1" fill="#fff" stroke="#c4c4c4" stroke-width="0.4"/>
<circle cx="354.8" cy="459.2" r="1.1" fill="#fff" stroke="#c4c4c4" stroke-width="0.4"/>
<line x1="432.6" y1="384.8" x2="432.6" y2="465.5" stroke="#b6b6b6" stroke-width="1.1" stroke-dasharray="1.4 1.5"/>
<line x1="432.6" y1="465.8" x2="432.6" y2="468.4" stroke="#222" stroke-width="0.85"/>
<text transform="translate(432.6 473.5) scale(0.88 1)" text-anchor="middle" class="t4">300:00</text>
<circle cx="432.6" cy="392.6" r="1.1" fill="#fff" stroke="#c4c4c4" stroke-width="0.4"/>
<circle cx="432.6" cy="405.9" r="1.1" fill="#fff" stroke="#c4c4c4" stroke-width="0.4"/>
<circle cx="432.6" cy="419.2" r="1.1" fill="#fff" stroke="#c4c4c4" stroke-width="0.4"/>
<circle cx="432.6" cy="432.6" r="1.1" fill="#fff" stroke="#c4c4c4" stroke-width="0.4"/>
<circle cx="432.6" cy="445.9" r="1.1" fill="#fff" stroke="#c4c4c4" stroke-width="0.4"/>
<circle cx="432.6" cy="459.2" r="1.1" fill="#fff" stroke="#c4c4c4" stroke-width="0.4"/>
<line x1="510.4" y1="384.8" x2="510.4" y2="465.5" stroke="#b6b6b6" stroke-width="1.1" stroke-dasharray="1.4 1.5"/>
<line x1="510.4" y1="465.8" x2="510.4" y2="468.4" stroke="#222" stroke-width="0.85"/>
<text transform="translate(510.4 473.5) scale(0.88 1)" text-anchor="middle" class="t4">320:00</text>
<circle cx="510.4" cy="392.6" r="1.1" fill="#fff" stroke="#c4c4c4" stroke-width="0.4"/>
<circle cx="510.4" cy="405.9" r="1.1" fill="#fff" stroke="#c4c4c4" stroke-width="0.4"/>
<circle cx="510.4" cy="419.2" r="1.1" fill="#fff" stroke="#c4c4c4" stroke-width="0.4"/>
<circle cx="510.4" cy="432.6" r="1.1" fill="#fff" stroke="#c4c4c4" stroke-width="0.4"/>
<circle cx="510.4" cy="445.9" r="1.1" fill="#fff" stroke="#c4c4c4" stroke-width="0.4"/>
<circle cx="510.4" cy="459.2" r="1.1" fill="#fff" stroke="#c4c4c4" stroke-width="0.4"/>
<line x1="588.2" y1="384.8" x2="588.2" y2="465.5" stroke="#b6b6b6" stroke-width="1.1" stroke-dasharray="1.4 1.5"/>
<line x1="588.2" y1="465.8" x2="588.2" y2="468.4" stroke="#222" stroke-width="0.85"/>
<text transform="translate(588.2 473.5) scale(0.88 1)" text-anchor="middle" class="t4">340:00</text>
<circle cx="588.2" cy="392.6" r="1.1" fill="#fff" stroke="#c4c4c4" stroke-width="0.4"/>
<circle cx="588.2" cy="405.9" r="1.1" fill="#fff" stroke="#c4c4c4" stroke-width="0.4"/>
<circle cx="588.2" cy="419.2" r="1.1" fill="#fff" stroke="#c4c4c4" stroke-width="0.4"/>
<circle cx="588.2" cy="432.6" r="1.1" fill="#fff" stroke="#c4c4c4" stroke-width="0.4"/>
<circle cx="588.2" cy="445.9" r="1.1" fill="#fff" stroke="#c4c4c4" stroke-width="0.4"/>
<circle cx="588.2" cy="459.2" r="1.1" fill="#fff" stroke="#c4c4c4" stroke-width="0.4"/>
<line x1="666.0" y1="384.8" x2="666.0" y2="465.5" stroke="#b6b6b6" stroke-width="1.1" stroke-dasharray="1.4 1.5"/>
<line x1="666.0" y1="465.8" x2="666.0" y2="468.4" stroke="#222" stroke-width="0.85"/>
<text transform="translate(666.0 473.5) scale(0.88 1)" text-anchor="middle" class="t4">360:00</text>
<circle cx="666.0" cy="392.6" r="1.1" fill="#fff" stroke="#c4c4c4" stroke-width="0.4"/>
<circle cx="666.0" cy="405.9" r="1.1" fill="#fff" stroke="#c4c4c4" stroke-width="0.4"/>
<circle cx="666.0" cy="419.2" r="1.1" fill="#fff" stroke="#c4c4c4" stroke-width="0.4"/>
<circle cx="666.0" cy="432.6" r="1.1" fill="#fff" stroke="#c4c4c4" stroke-width="0.4"/>
<circle cx="666.0" cy="445.9" r="1.1" fill="#fff" stroke="#c4c4c4" stroke-width="0.4"/>
<circle cx="666.0" cy="459.2" r="1.1" fill="#fff" stroke="#c4c4c4" stroke-width="0.4"/>
<line x1="743.8" y1="384.8" x2="743.8" y2="465.5" stroke="#b6b6b6" stroke-width="1.1" stroke-dasharray="1.4 1.5"/>
<line x1="743.8" y1="465.8" x2="743.8" y2="468.4" stroke="#222" stroke-width="0.85"/>
<text transform="translate(743.8 473.5) scale(0.88 1)" text-anchor="middle" class="t4">380:00</text>
<circle cx="743.8" cy="392.6" r="1.1" fill="#fff" stroke="#c4c4c4" stroke-width="0.4"/>
<circle cx="743.8" cy="405.9" r="1.1" fill="#fff" stroke="#c4c4c4" stroke-width="0.4"/>
<circle cx="743.8" cy="419.2" r="1.1" fill="#fff" stroke="#c4c4c4" stroke-width="0.4"/>
<circle cx="743.8" cy="432.6" r="1.1" fill="#fff" stroke="#c4c4c4" stroke-width="0.4"/>
<circle cx="743.8" cy="445.9" r="1.1" fill="#fff" stroke="#c4c4c4" stroke-width="0.4"/>
<circle cx="743.8" cy="459.2" r="1.1" fill="#fff" stroke="#c4c4c4" stroke-width="0.4"/>
<line x1="821.6" y1="384.8" x2="821.6" y2="465.5" stroke="#b6b6b6" stroke-width="1.1" stroke-dasharray="1.4 1.5"/>
<line x1="821.6" y1="465.8" x2="821.6" y2="468.4" stroke="#222" stroke-width="0.85"/>
<text transform="translate(821.6 473.5) scale(0.88 1)" text-anchor="middle" class="t4">400:00</text>
<circle cx="821.6" cy="392.6" r="1.1" fill="#fff" stroke="#c4c4c4" stroke-width="0.4"/>
<circle cx="821.6" cy="405.9" r="1.1" fill="#fff" stroke="#c4c4c4" stroke-width="0.4"/>
<circle cx="821.6" cy="419.2" r="1.1" fill="#fff" stroke="#c4c4c4" stroke-width="0.4"/>
<circle cx="821.6" cy="432.6" r="1.1" fill="#fff" stroke="#c4c4c4" stroke-width="0.4"/>
<circle cx="821.6" cy="445.9" r="1.1" fill="#fff" stroke="#c4c4c4" stroke-width="0.4"/>
<circle cx="821.6" cy="459.2" r="1.1" fill="#fff" stroke="#c4c4c4" stroke-width="0.4"/>
  <line x1="35.5" y1="385" x2="35.5" y2="468.3" stroke="#1a1a1a" stroke-width="0.9"/>
  <line x1="33" y1="385.2" x2="35.4" y2="385.2" stroke="#222" stroke-width="0.6"/>
  <line x1="35" y1="465.8" x2="829.4" y2="465.8" stroke="#222" stroke-width="0.9"/>
  <line x1="829.1" y1="465.8" x2="829.1" y2="468.2" stroke="#222" stroke-width="0.6"/>
  <line x1="43.5" y1="398.7" x2="821.5" y2="399.8" stroke="#6a8fd8" stroke-width="0.75"/>
  <rect x="42.6" y="397.8" width="1.8" height="1.8" fill="#1f56d8"/>
  <rect x="820.6" y="398.9" width="1.8" height="1.8" fill="#1f56d8"/>
  <text transform="translate(15.6 425.8) rotate(-90)" text-anchor="middle" font-size="4.87" font-weight="bold" fill="#000">% of Documents</text>
</svg>

<!-- page scrollbar -->
<div class="a" style="left:843px;top:74px;width:7px;height:404px;background:#f1f1f1"></div>
<div class="a" style="left:843.8px;top:82px;width:6.2px;height:370px;background:#c1c1c1"></div>
<svg width="850" height="478" viewBox="0 0 850 478" style="pointer-events:none">
  <path d="M845 79 L846.6 77.3 L848.2 79 Z" fill="#555"/>
  <path d="M845 474.3 L846.6 476 L848.2 474.3 Z" fill="#555"/>
</svg>

</body>
</html>
